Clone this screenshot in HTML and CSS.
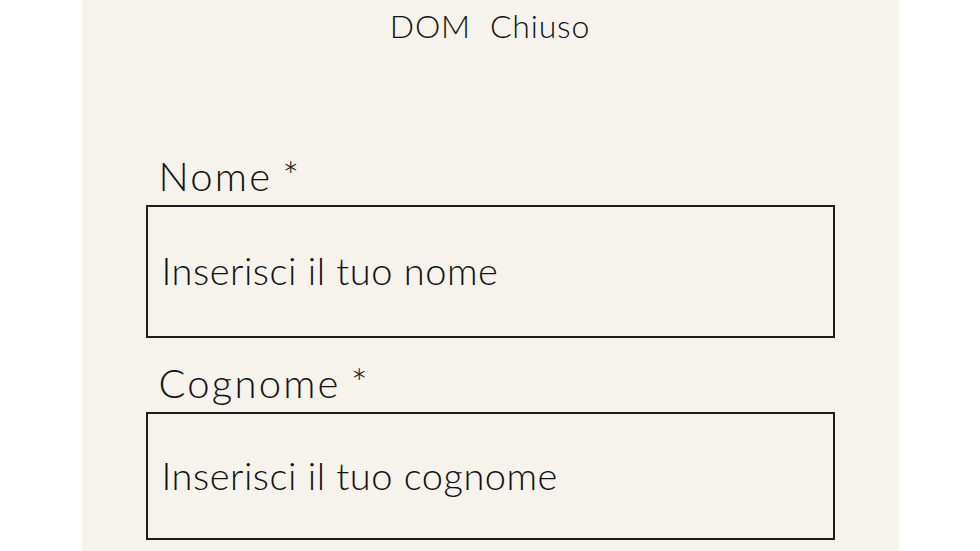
FILE: index.html
```html
<!DOCTYPE html>
<html lang="it">
<head>
    <meta charset="UTF-8">
    <meta name="viewport" content="width=device-width, initial-scale=1.0">
    <title>DOM Chiuso</title>
    <link rel="stylesheet" href="styles.css">
</head>
<body>

    <!-- Pannello centrale con il modulo -->
    <div class="panel">
        <div class="title">DOM&nbsp; Chiuso</div>

        <form class="form">
            <label class="field">
                <span class="label">Nome *</span>
                <input type="text" class="input input-nome" placeholder="Inserisci il tuo nome">
            </label>
            <label class="field">
                <span class="label">Cognome *</span>
                <input type="text" class="input input-cognome" placeholder="Inserisci il tuo cognome">
            </label>
        </form>
    </div>

</body>
</html>
```

FILE: styles.css
```css
html, body {
    margin: 0;
    height: 100%;
    background: #ffffff;
}
body {
    font-family: Lato, "Noto Sans", sans-serif;
    font-weight: 300;
    color: #111111;
    overflow: hidden;
}
.panel {
    width: 815px;
    min-height: 100%;
    margin: 0 auto;
    background: #f6f3ed;
    box-shadow: 0 0 3px rgba(235, 205, 170, 0.6);
}
.title {
    padding-top: 6px;
    font-size: 32px;
    line-height: 40px;
    letter-spacing: 0.8px;
    text-align: center;
}
.form {
    display: flex;
    flex-direction: column;
    gap: 21px;
    padding: 106px 63px 0;
}
.field {
    display: flex;
    flex-direction: column;
    gap: 5px;
}
.label {
    padding-left: 13px;
    font-size: 40px;
    line-height: 48px;
    letter-spacing: 2.2px;
    word-spacing: -3px;
}
.input {
    box-sizing: border-box;
    width: 100%;
    margin: 0;
    padding: 0 14px 3px;
    border: 2px solid #1c1c1c;
    background: transparent;
    font-family: inherit;
    font-weight: 300;
    font-size: 38px;
    letter-spacing: 0.5px;
    color: #111111;
    outline: none;
}
.input::placeholder {
    color: #111111;
    opacity: 1;
}
.input-nome {
    height: 133px;
}
.input-cognome {
    height: 128px;
}
```
